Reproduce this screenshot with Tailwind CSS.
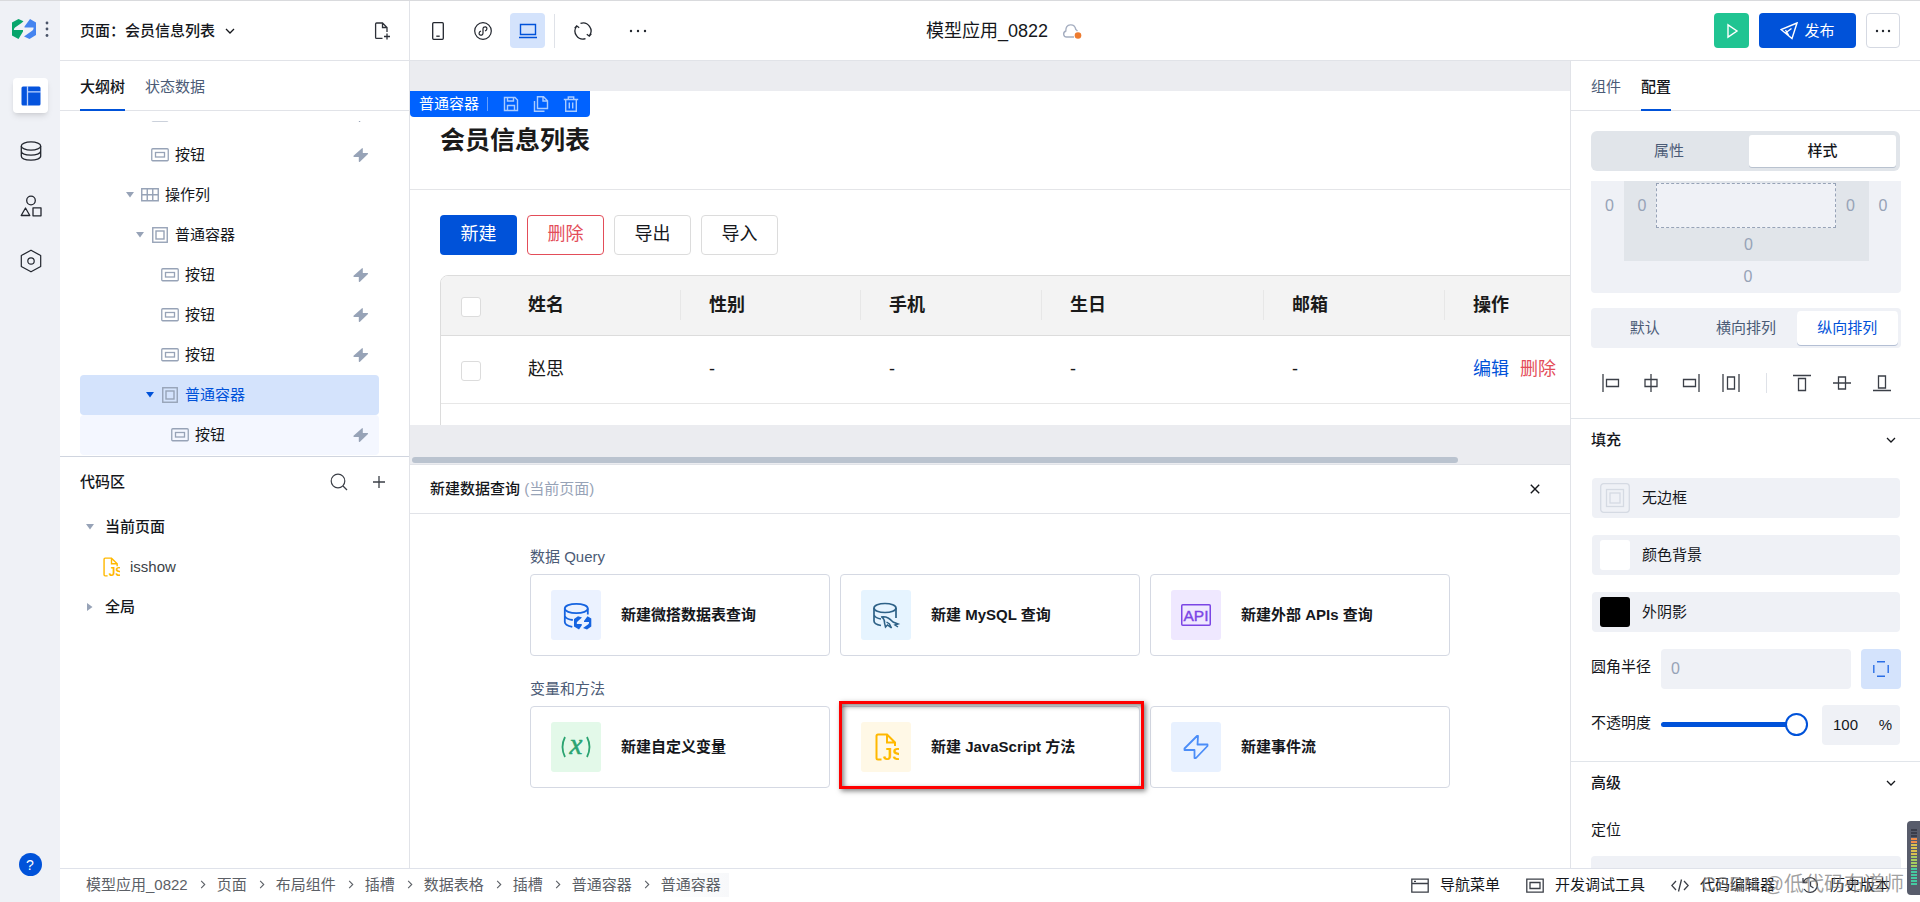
<!DOCTYPE html>
<html lang="zh-CN">
<head>
<meta charset="utf-8">
<meta name="viewport" content="width=device-width, initial-scale=1">
<title>模型应用_0822</title>
<script src="https://cdn.jsdelivr.net/npm/@tailwindcss/browser@4"></script>
</head>
<body class="relative flex h-screen overflow-hidden border-t border-[#d9dadd] bg-white font-['Liberation_Sans','Noto_Sans_CJK_SC',sans-serif] text-[15px] leading-6 text-[#15171c]">

<!-- shared icons -->
<svg class="hidden" aria-hidden="true">
  <symbol id="i-button" viewBox="0 0 18 14"><rect x=".75" y=".75" width="16.5" height="12" rx="1" fill="none" stroke="#97a3b7" stroke-width="1.3"/><rect x="4.5" y="4.5" width="9" height="4.5" fill="none" stroke="#97a3b7" stroke-width="1.3"/></symbol>
  <symbol id="i-box" viewBox="0 0 18 18"><rect x="1.75" y="1.75" width="14.5" height="14.5" fill="none" stroke="#97a3b7" stroke-width="1.4"/><rect x="5" y="5" width="8" height="8" fill="none" stroke="#97a3b7" stroke-width="1.4"/></symbol>
  <symbol id="i-grid" viewBox="0 0 18 14"><path d="M.75.75h16.5v12H.75zM.75 6.75h16.5M6.25.75v12M11.75.75v12" fill="none" stroke="#97a3b7" stroke-width="1.4"/></symbol>
  <symbol id="i-bolt" viewBox="0 0 16 16"><path d="M9 1.200.5 8.800Q0 9.900 1 9.900H5.800V14.600Q6 15.400 6.700 14.900L15 7Q15.400 6.100 14.500 6.100H9.800V1.500Q9.600.8 9 1.200z" fill="#97a3b7"/></symbol>
  <symbol id="i-down" viewBox="0 0 10 10"><path d="M1 2h8L5 7.500z" fill="currentColor"/></symbol>
  <symbol id="i-chev" viewBox="0 0 10 10"><path d="M1 3l4 4 4-4" fill="none" stroke="currentColor" stroke-width="1.3"/></symbol>
  <symbol id="i-next" viewBox="0 0 10 10"><path d="M3.5 1l4 4-4 4" fill="none" stroke="#5c6066" stroke-width="1.2"/></symbol>
  <symbol id="i-js" viewBox="0 0 24 28"><path d="M6.500 26.500H3Q1.500 26.500 1.500 25V3Q1.500 1.500 3 1.500H12l8 8V13M12 1.500V9.500h8" fill="none" stroke="#ffb800" stroke-width="2"/><text x="8" y="27" font-family="Liberation Sans Narrow, Liberation Sans" font-size="17" font-weight="700" fill="#ffb800">JS</text></symbol>
</svg>

<aside class="flex w-[60px] shrink-0 flex-col items-center bg-[#eff1f6]">
  <div class="flex h-[77px] w-full items-start gap-[9px] pt-[18px] pl-3">
    <svg class="h-5 w-6" viewBox="0 0 24 20" aria-label="logo"><path d="M0 3.500 6.500 0 11.500 2.300 9.500 4 3 8.500Q1.300 10 2 11H11V12.500L6.500 20 0 16.500z" fill="#07a56b"/><path d="M24 16 17.500 20 12 17.500 20.500 11.500Q22 10 21.500 8.500H12.500V7.500L18 0 24 3.500z" fill="#4584ef"/></svg>
    <svg class="h-[18px] w-1" viewBox="0 0 4 18" fill="#4a5468"><circle cx="2" cy="4" r="1.4"/><circle cx="2" cy="10" r="1.4"/><circle cx="2" cy="16.5" r="1.4"/></svg>
  </div>
  <nav class="flex flex-col items-center gap-5 pl-px">
    <button class="flex size-[35px] items-center justify-center rounded bg-white shadow-md" aria-label="页面"><svg class="size-5" viewBox="0 0 20 20"><rect x=".5" y=".5" width="19" height="19" rx="1.5" fill="#0553dd"/><path d="M6.500 0v20M6.500 5.800H20" stroke="#bcd3ff" stroke-width="1.3"/></svg></button>
    <button class="flex size-[35px] items-center justify-center" aria-label="数据"><svg class="h-5 w-[22px]" viewBox="0 0 22 20" fill="none" stroke="#22262e" stroke-width="1.3"><ellipse cx="11" cy="5" rx="9.7" ry="4.2"/><path d="M1.300 5v10C1.300 20.500 20.700 20.500 20.700 15V5M1.300 10C1.300 15.400 20.700 15.400 20.700 10"/></svg></button>
    <button class="flex size-[35px] items-center justify-center" aria-label="组件"><svg class="size-[22px]" viewBox="0 0 22 22" fill="none" stroke="#22262e" stroke-width="1.3"><circle cx="11" cy="5.5" r="4.3"/><path d="M5.500 13 1.200 20.500h8.600zM13 12.800h8v8h-8z" stroke-linejoin="round"/></svg></button>
    <button class="flex size-[35px] items-center justify-center" aria-label="设置"><svg class="h-6 w-[22px]" viewBox="0 0 22 24" fill="none" stroke="#22262e" stroke-width="1.2"><path d="M11 1.200 20.700 6.600v10.800L11 22.800 1.300 17.400V6.600z" stroke-linejoin="round"/><circle cx="11" cy="12" r="3.2"/></svg></button>
  </nav>
  <button class="mt-auto mb-[26px] flex size-[23px] items-center justify-center rounded-full bg-[#0052d9] text-sm text-white" aria-label="帮助">?</button>
</aside>

<div class="flex min-w-0 flex-1 flex-col">

<header class="flex h-[60px] shrink-0 border-b border-[#e1e3e8]">
  <div class="flex w-[350px] shrink-0 items-center border-r border-[#e1e3e8] pr-4 pl-5">
    <button class="flex items-center gap-2.5 font-medium">页面：会员信息列表<svg class="size-2.5"><use href="#i-chev"/></svg></button>
    <button class="ml-auto" aria-label="新建页面"><svg class="size-5" viewBox="0 0 20 20" fill="none" stroke="#2d3139" stroke-width="1.3"><path d="M9.500 17.400H3.600Q2.600 17.400 2.600 16.400V3Q2.600 2 3.600 2H9.500l4.500 4.500v4.500M9.500 2v4.500H14M14 12.500v6M11 15.500h6"/></svg></button>
  </div>
  <div class="flex min-w-0 flex-1 items-center pr-5">
    <div class="flex flex-[506] items-center pl-2.5">
      <button class="flex size-[35px] items-center justify-center" aria-label="手机"><svg class="h-[18px] w-3" viewBox="0 0 12 18" fill="none" stroke="#22262e" stroke-width="1.3"><rect x=".7" y=".7" width="10.6" height="16.6" rx="1"/><path d="M4.300 14.200h3.400"/></svg></button>
      <button class="ml-2.5 flex size-[35px] items-center justify-center" aria-label="小程序"><svg class="size-[18px]" viewBox="0 0 18 18" fill="none" stroke="#22262e" stroke-width="1.2"><circle cx="9" cy="9" r="8.3"/><path d="M7 9C4.500 9.800 4.500 12.800 6.500 13.200 8 13.300 9 12.500 9 11V7C9 5.500 10 4.700 11.500 4.800 13.500 5.200 13.500 8.200 11 9"/></svg></button>
      <button class="ml-2.5 flex size-[35px] items-center justify-center rounded bg-[#d4e3fc]" aria-label="电脑"><svg class="h-4 w-[18px]" viewBox="0 0 18 16" fill="none" stroke="#0052d9" stroke-width="1.4"><path d="M1.500 1.500h15v10h-15zM0 14.500h18"/></svg></button>
      <span class="ml-[9px] h-[34px] w-px bg-[#dfe2e8]"></span>
      <button class="ml-2.5 flex size-[35px] items-center justify-center" aria-label="刷新"><svg class="size-[18px]" viewBox="0 0 18 18" fill="none" stroke="#22262e" stroke-width="1.3"><path d="M6.500 1.300A8 8 0 0 1 15.300 13.800M11.500 16.700A8 8 0 0 1 2.700 4.200M17.300 11.800 15.300 14.200 12.800 12.300M.7 6.200 2.700 3.800 5.200 5.700"/></svg></button>
      <button class="ml-5 flex size-[35px] items-center justify-center" aria-label="更多"><svg class="h-1 w-[18px]" viewBox="0 0 18 4" fill="#22262e"><circle cx="2" cy="2" r="1.2"/><circle cx="9" cy="2" r="1.2"/><circle cx="16" cy="2" r="1.2"/></svg></button>
    </div>
    <h1 class="flex shrink-0 items-center gap-3.5 text-lg">模型应用_0822<svg class="h-[18px] w-5" viewBox="0 0 20 18"><path d="M12 15H4.500C1.500 15 .3 10.500 3.800 9 3.600 1.300 12.500 1 13.800 7.500L15.500 9" fill="none" stroke="#a5aec0" stroke-width="1.4"/><circle cx="16" cy="13.5" r="3.3" fill="#ed7b2f"/></svg></h1>
    <div class="flex flex-[818] items-center justify-end gap-2.5">
      <button class="flex size-[35px] items-center justify-center rounded bg-[#20c492]" aria-label="运行"><svg class="size-4" viewBox="0 0 16 16" fill="none" stroke="#fff" stroke-width="1.4"><path d="M4 1.800v12.400L13 8z"/></svg></button>
      <button class="flex h-[35px] w-[97px] items-center justify-center gap-1.5 rounded bg-[#0052d9] text-white"><svg class="size-[18px]" viewBox="0 0 18 18" fill="none" stroke="#fff" stroke-width="1.4"><path d="M17 1 1 7.500l11 9zM5.500 11l6-4.500M8.500 13l-3-5"/></svg>发布</button>
      <button class="flex h-[35px] w-[34px] items-center justify-center rounded border border-[#d5d9e2]" aria-label="更多操作"><svg class="h-1 w-[18px]" viewBox="0 0 18 4" fill="#22262e"><circle cx="3" cy="2" r="1.2"/><circle cx="9" cy="2" r="1.2"/><circle cx="15" cy="2" r="1.2"/></svg></button>
    </div>
  </div>
</header>

<main class="flex min-h-0 flex-1">

<!-- outline tree and code list -->
<section class="flex w-[350px] shrink-0 flex-col border-r border-[#e1e3e8]">
  <div class="flex h-[50px] shrink-0 gap-5 border-b border-[#e1e3e8] px-5">
    <button class="h-[50px] border-b-2 border-[#0052d9] pt-1 font-medium">大纲树</button>
    <button class="h-[50px] pt-0.5 text-[#4b5b76]">状态数据</button>
  </div>
  <div class="h-[345px] shrink-0 px-5 pt-2.5">
    <div class="h-[335px] overflow-hidden">
    <ul class="mt-[-26px] w-[299px]">
      <li class="flex h-10 items-center pr-2.5 pl-[71px]"><svg class="h-3.5 w-[18px]"><use href="#i-button"/></svg><svg class="ml-auto size-4"><use href="#i-bolt"/></svg></li>
      <li class="flex h-10 items-center pr-2.5 pl-[71px]"><svg class="h-3.5 w-[18px]"><use href="#i-button"/></svg><span class="ml-1.5">按钮</span><svg class="ml-auto size-4"><use href="#i-bolt"/></svg></li>
      <li class="flex h-10 items-center pl-[45px]"><svg class="size-2.5 text-[#97a3b7]"><use href="#i-down"/></svg><svg class="ml-1.5 h-3.5 w-[18px]"><use href="#i-grid"/></svg><span class="ml-1.5">操作列</span></li>
      <li class="flex h-10 items-center pl-[55px]"><svg class="size-2.5 text-[#97a3b7]"><use href="#i-down"/></svg><svg class="ml-1.5 size-[18px]"><use href="#i-box"/></svg><span class="ml-1.5">普通容器</span></li>
      <li class="flex h-10 items-center pr-2.5 pl-[81px]"><svg class="h-3.5 w-[18px]"><use href="#i-button"/></svg><span class="ml-1.5">按钮</span><svg class="ml-auto size-4"><use href="#i-bolt"/></svg></li>
      <li class="flex h-10 items-center pr-2.5 pl-[81px]"><svg class="h-3.5 w-[18px]"><use href="#i-button"/></svg><span class="ml-1.5">按钮</span><svg class="ml-auto size-4"><use href="#i-bolt"/></svg></li>
      <li class="flex h-10 items-center pr-2.5 pl-[81px]"><svg class="h-3.5 w-[18px]"><use href="#i-button"/></svg><span class="ml-1.5">按钮</span><svg class="ml-auto size-4"><use href="#i-bolt"/></svg></li>
      <li class="flex h-10 items-center rounded bg-[#d4e3fc] pl-[65px] text-[#0052d9]"><svg class="size-2.5"><use href="#i-down"/></svg><svg class="ml-1.5 size-[18px]"><use href="#i-box"/></svg><span class="ml-1.5">普通容器</span></li>
      <li class="flex h-10 items-center rounded bg-[#f4f7ff] pr-2.5 pl-[91px]"><svg class="h-3.5 w-[18px]"><use href="#i-button"/></svg><span class="ml-1.5">按钮</span><svg class="ml-auto size-4"><use href="#i-bolt"/></svg></li>
    </ul>
    </div>
  </div>
  <div class="flex-1 border-t border-[#d0d5df] px-5">
    <div class="flex h-[50px] items-center">
      <h2 class="font-medium">代码区</h2>
      <button class="ml-auto" aria-label="搜索"><svg class="size-[18px]" viewBox="0 0 18 18" fill="none" stroke="#3b3f47" stroke-width="1.2"><circle cx="8" cy="8" r="6.8"/><path d="M13 13l4 4"/></svg></button>
      <button class="mr-[3px] ml-6" aria-label="新建"><svg class="size-3.5" viewBox="0 0 14 14" stroke="#3b3f47" stroke-width="1.3"><path d="M7 1v12M1 7h12"/></svg></button>
    </div>
    <ul>
      <li class="flex h-10 items-center gap-2.5 pl-[5px] font-medium"><svg class="size-2.5 text-[#97a3b7]"><use href="#i-down"/></svg>当前页面</li>
      <li class="flex h-10 items-center gap-2.5 pl-[23px] text-[#3b3f47]"><svg class="h-5 w-[17px]"><use href="#i-js"/></svg>isshow</li>
      <li class="flex h-10 items-center gap-2.5 pl-[5px] font-medium"><svg class="size-2.5 -rotate-90 text-[#97a3b7]"><use href="#i-down"/></svg>全局</li>
    </ul>
  </div>
</section>

<!-- canvas and query panel -->
<section class="flex min-w-0 flex-1 flex-col">
  <div class="relative h-[403px] shrink-0 bg-[#ebecf0] pt-[30px]">
    <div class="absolute top-[30px] left-0 flex h-[26px] w-[180px] items-center rounded-b bg-[#0062ff] pl-[9px] text-white">
      普通容器<span class="ml-2 h-3.5 w-px bg-white/40"></span>
      <button class="ml-[15px]" aria-label="保存"><svg class="size-4" viewBox="0 0 16 16" fill="none" stroke="#a9cbff" stroke-width="1.4"><path d="M1.500 1.500h10.500L14.500 4v10.500h-13zM4.500 1.500v3.500h6v-3.500M4.500 14.500v-5h7v5"/></svg></button>
      <button class="ml-3.5" aria-label="复制"><svg class="size-4" viewBox="0 0 16 16" fill="none" stroke="#a9cbff" stroke-width="1.4"><path d="M4.500.8h6l4 4v7.700h-10zM10 .8V5h4.500M1.500 5v10.200h10"/></svg></button>
      <button class="ml-3.5" aria-label="删除"><svg class="size-4" viewBox="0 0 16 16" fill="none" stroke="#a9cbff" stroke-width="1.4"><path d="M.8 3.500h14.400M5.300 3.500V1h5.400v2.500M2.700 3.500v11.700h10.600V3.500M6.300 6.500v6M9.700 6.500v6"/></svg></button>
    </div>
    <div class="h-[334px] overflow-hidden bg-white">
      <div class="flex h-[99px] items-center border-b border-[#e4e5e8] px-[30px]"><h2 class="text-[25px] leading-8 font-bold text-[#1a1a1a]">会员信息列表</h2></div>
      <div class="pt-[25px] pl-[30px]">
        <div class="flex gap-2.5 text-lg">
          <button class="h-10 w-[77px] rounded bg-[#0052d9] pb-0.5 text-white">新建</button>
          <button class="h-10 w-[77px] rounded border border-[#e34d59] pb-0.5 text-[#e34d59]">删除</button>
          <button class="h-10 w-[77px] rounded border border-[#dcdcdc] pb-0.5">导出</button>
          <button class="h-10 w-[77px] rounded border border-[#dcdcdc] pb-0.5">导入</button>
        </div>
        <div class="mt-5 w-[1220px] overflow-hidden rounded-t-lg border border-[#dcdcdc]">
          <table class="w-full table-fixed text-left text-lg text-[#1a1a1a]">
            <colgroup><col class="w-[59px]"><col class="w-[181px]"><col class="w-[180px]"><col class="w-[181px]"><col class="w-[222px]"><col class="w-[181px]"><col></colgroup>
            <thead class="bg-[#f3f3f3]">
              <tr class="h-[59px] border-b border-[#dcdcdc] font-bold">
                <th class="pt-1 pl-5"><input type="checkbox" aria-label="全选" class="block size-5 appearance-none rounded-[3px] border border-[#dcdcdc] bg-white"></th>
                <th class="p-0"><div class="flex h-[30px] items-center border-r border-[#e7e7e7] pl-7">姓名</div></th>
                <th class="p-0"><div class="flex h-[30px] items-center border-r border-[#e7e7e7] pl-7">性别</div></th>
                <th class="p-0"><div class="flex h-[30px] items-center border-r border-[#e7e7e7] pl-7">手机</div></th>
                <th class="p-0"><div class="flex h-[30px] items-center border-r border-[#e7e7e7] pl-7">生日</div></th>
                <th class="p-0"><div class="flex h-[30px] items-center border-r border-[#e7e7e7] pl-7">邮箱</div></th>
                <th class="p-0"><div class="flex h-[30px] items-center pl-7">操作</div></th>
              </tr>
            </thead>
            <tbody>
              <tr class="h-[68px] border-b border-[#e7e7e7]">
                <td class="pt-1 pl-5"><input type="checkbox" aria-label="选择赵思" class="block size-5 appearance-none rounded-[3px] border border-[#dcdcdc] bg-white"></td>
                <td class="pl-7">赵思</td><td class="pl-7">-</td><td class="pl-7">-</td><td class="pl-7">-</td><td class="pl-7">-</td>
                <td class="pl-7"><div class="flex gap-[11px]"><a href="#" class="text-[#0052d9]">编辑</a><a href="#" class="text-[#e34d59]">删除</a></div></td>
              </tr>
              <tr class="h-[68px]"><td colspan="7"></td></tr>
            </tbody>
          </table>
        </div>
      </div>
    </div>
    <div class="mt-8 mr-28 ml-0.5 h-1.5 rounded-full bg-[#bac3cf]"></div>
  </div>

  <div class="flex-1 border-t border-[#e1e3e8]">
    <div class="flex h-[49px] items-center border-b border-[#e1e3e8] px-5">
      <h2 class="font-medium">新建数据查询 <span class="font-normal text-[#97a3b7]">(当前页面)</span></h2>
      <button class="mr-2.5 ml-auto" aria-label="关闭"><svg class="size-2.5" viewBox="0 0 10 10" stroke="#15171c" stroke-width="1.4"><path d="M.8.8l8.400 8.400M9.200.8.8 9.200"/></svg></button>
    </div>
    <div class="mx-auto flex max-w-[920px] flex-col gap-[21px] pt-[31px]">
      <div>
        <h3 class="mb-[5px] text-[#4b5b76]">数据 Query</h3>
        <div class="grid grid-cols-3 gap-2.5">
          <button class="flex h-[82px] items-center gap-5 rounded border border-[#d5d9e3] px-5 font-bold">
            <svg class="size-[50px]" viewBox="0 0 50 50"><rect width="50" height="50" rx="3" fill="#ebf2ff"/><g fill="none" stroke="#1664e0" stroke-width="1.8"><ellipse cx="25.300" cy="18.500" rx="11.500" ry="4.700"/><path d="M13.800 18.500v13.500c0 2.300 3.500 4 7.500 4.800M13.800 26c1 2.500 4.500 3.500 8 4M36.800 18.500v6"/></g><path d="M23 29 27 26.200 31 27.500 26.500 31.500Q25 33 26 34H30.500L31 35 28 39.500 23 36.500z" fill="#1664e0"/><path d="M40.300 36.500 36 39.500 32 38 37 34.500Q38.500 33 38 32H33V31L36.500 26.200 40.300 28.500z" fill="#1664e0"/></svg>新建微搭数据表查询</button>
          <button class="flex h-[82px] items-center gap-5 rounded border border-[#d5d9e3] px-5 font-bold">
            <svg class="size-[50px]" viewBox="0 0 50 50"><rect width="50" height="50" rx="3" fill="#e6f4ff"/><g fill="none" stroke="#2d6187" stroke-width="1.7"><ellipse cx="24" cy="18" rx="11" ry="4.500"/><path d="M13 18v13c0 2.300 3 3.800 7 4.500M13 25c1 2.500 4 3.500 7 4M35 18v10"/><path d="M20 27c6-1 9 2 12 5l5 2-3 1 3 2M21 27c2 2 3 4 2.500 6l1 4 2-2 4 3-2-4-3-2" stroke-width="1.5"/></g></svg>新建 MySQL 查询</button>
          <button class="flex h-[82px] items-center gap-5 rounded border border-[#d5d9e3] px-5 font-bold">
            <svg class="size-[50px]" viewBox="0 0 50 50"><rect width="50" height="50" rx="3" fill="#efe8ff"/><rect x="10.750" y="14.750" width="28.500" height="20.500" rx="1" fill="none" stroke="#7b45e5" stroke-width="1.5"/><text x="25" y="30.500" text-anchor="middle" font-family="Liberation Sans" font-size="15.500" font-weight="400" stroke="#7b45e5" stroke-width=".4" fill="#7b45e5">API</text></svg>新建外部 APIs 查询</button>
        </div>
      </div>
      <div>
        <h3 class="mb-[5px] text-[#4b5b76]">变量和方法</h3>
        <div class="grid grid-cols-3 gap-2.5">
          <button class="flex h-[82px] items-center gap-5 rounded border border-[#d5d9e3] px-5 font-bold">
            <svg class="size-[50px]" viewBox="0 0 50 50"><rect width="50" height="50" rx="3" fill="#e3f9e9"/><path d="M14 15q-5 10 0 20M36 15q5 10 0 20" fill="none" stroke="#2ba471" stroke-width="1.8"/><text x="25" y="31.500" text-anchor="middle" font-family="Liberation Serif" font-style="italic" font-size="29" font-weight="400" stroke="#2ba471" stroke-width=".5" fill="#2ba471">x</text></svg>新建自定义变量</button>
          <div class="relative">
            <button class="flex h-[82px] w-full items-center gap-5 rounded border border-[#d5d9e3] px-5 font-bold">
              <span class="flex size-[50px] items-center justify-center rounded-[3px] bg-[#fff8e6]"><svg class="ml-0.5 h-7 w-6"><use href="#i-js"/></svg></span>新建 JavaScript 方法</button>
            <!-- highlight frame -->
            <span class="pointer-events-none absolute -top-[5px] -right-1 -bottom-px -left-px z-10 border-3 border-[#fe0000] shadow-[2px_2px_5px_rgba(0,0,0,0.5),inset_2px_2px_5px_rgba(0,0,0,0.5)]"></span>
          </div>
          <button class="flex h-[82px] items-center gap-5 rounded border border-[#d5d9e3] px-5 font-bold">
            <svg class="size-[50px]" viewBox="0 0 50 50"><rect width="50" height="50" rx="3" fill="#e8f1ff"/><path d="M26 14 13.500 26.500v1.500H23.500L23.500 36h1.500L36.500 24v-1.500H26.500L27 14z" fill="none" stroke="#4b8df8" stroke-width="1.8" stroke-linejoin="round"/></svg>新建事件流</button>
        </div>
      </div>
    </div>
  </div>
</section>

<!-- style settings -->
<section class="flex w-[350px] shrink-0 flex-col overflow-hidden border-l border-[#e1e3e8]">
  <div class="flex h-[50px] shrink-0 gap-5 border-b border-[#e1e3e8] px-5">
    <button class="h-[50px] pt-0.5 text-[#4b5b76]">组件</button>
    <button class="h-[50px] border-b-2 border-[#0052d9] pt-1 font-medium">配置</button>
  </div>
  <div class="pt-5 pr-[19px] pl-5">
    <div class="mr-px flex h-10 rounded-md bg-[#e1e5ea] p-1">
      <button class="flex-1 pr-1.5 text-[#4b5b76]">属性</button>
      <button class="w-[147px] rounded-[3px] bg-white font-medium shadow-[0_1px_0_#b9c2cf]">样式</button>
    </div>
    <div class="mt-2.5 rounded-b bg-[#eff1f6] text-center text-base text-[#97a3b7]">
      <div class="flex">
        <span class="w-[33px] pt-[13px] pl-1">0</span>
        <div class="flex-1 bg-[#e1e5ea]">
          <div class="flex pt-0.5">
            <span class="w-8 pt-[11px] pl-1">0</span>
            <div class="h-[45px] flex-1 border border-dashed border-[#97a3b7] bg-[#eff1f6]"></div>
            <span class="w-[33px] pt-[11px] pr-1">0</span>
          </div>
          <div class="h-[33px] pt-[5px] pl-1">0</div>
        </div>
        <span class="w-8 pt-[13px] pr-1">0</span>
      </div>
      <div class="h-8 pt-1 pl-1">0</div>
    </div>
    <div class="mt-[15px] grid h-10 grid-cols-3 rounded bg-[#eff1f6] p-[3px] text-[#4b5b76]">
      <button>默认</button><button>横向排列</button>
      <button class="rounded bg-white text-[#0052d9] shadow-[0_1px_0_#b4bfd4]">纵向排列</button>
    </div>
    <div class="flex h-[70px] items-center justify-between pr-2.5 pl-[11px] text-[#3b3f47]">
      <button aria-label="左对齐"><svg class="size-[18px]" viewBox="0 0 18 18" fill="none" stroke="currentColor" stroke-width="1.3"><path d="M1 0v18M4.500 5.500h12v7h-12z"/></svg></button>
      <button aria-label="水平居中"><svg class="size-[18px]" viewBox="0 0 18 18" fill="none" stroke="currentColor" stroke-width="1.3"><path d="M9 0v18M3 5.500h12v7H3z"/></svg></button>
      <button aria-label="右对齐"><svg class="size-[18px]" viewBox="0 0 18 18" fill="none" stroke="currentColor" stroke-width="1.3"><path d="M17 0v18M1.500 5.500h12v7h-12z"/></svg></button>
      <button aria-label="水平分布"><svg class="size-[18px]" viewBox="0 0 18 18" fill="none" stroke="currentColor" stroke-width="1.3"><path d="M1 0v18M17 0v18M5.500 3h7v12h-7z"/></svg></button>
      <span class="mx-1 h-5 w-px bg-[#dfe2e8]"></span>
      <button aria-label="顶对齐"><svg class="size-[18px]" viewBox="0 0 18 18" fill="none" stroke="currentColor" stroke-width="1.3"><path d="M0 1.500h18M5.500 4.500h7v12h-7z"/></svg></button>
      <button aria-label="垂直居中"><svg class="size-[18px]" viewBox="0 0 18 18" fill="none" stroke="currentColor" stroke-width="1.3"><path d="M0 9h18M5.500 3h7v12h-7z"/></svg></button>
      <button aria-label="底对齐"><svg class="size-[18px]" viewBox="0 0 18 18" fill="none" stroke="currentColor" stroke-width="1.3"><path d="M0 16.500h18M5.500 2h7v12h-7z"/></svg></button>
    </div>
  </div>
  <div class="border-t border-[#e1e5ea] pr-[19px] pl-5">
    <button class="flex h-[42px] w-full items-center justify-between pr-[5px] font-medium">填充<svg class="size-2.5"><use href="#i-chev"/></svg></button>
    <div class="mt-[17px] flex flex-col gap-[17px] px-px">
      <button class="flex h-10 items-center gap-3 rounded bg-[#eff1f6] px-2"><svg class="size-[30px]" viewBox="0 0 30 30" fill="none" stroke="#d5dae3" stroke-width="1.3"><rect x=".7" y=".7" width="28.6" height="28.6" rx="3"/><rect x="6.5" y="6.5" width="17" height="17"/><rect x="10" y="10" width="10" height="10"/></svg>无边框</button>
      <button class="flex h-10 items-center gap-3 rounded bg-[#eff1f6] px-2"><span class="size-[30px] rounded-[3px] bg-white"></span>颜色背景</button>
      <button class="flex h-10 items-center gap-3 rounded bg-[#eff1f6] px-2"><span class="size-[30px] rounded-[3px] bg-black"></span>外阴影</button>
    </div>
    <div class="mt-[17px] flex h-10 items-center gap-2.5">
      <label for="radius" class="shrink-0 pb-1">圆角半径</label>
      <input id="radius" type="text" placeholder="0" class="h-10 min-w-0 flex-1 rounded bg-[#eff1f6] px-2.5 text-base outline-none placeholder:text-[#97a3b7]">
      <button class="flex size-10 shrink-0 items-center justify-center rounded bg-[#d4e3fc]" aria-label="四角"><svg class="size-4" viewBox="0 0 16 16" stroke="#2a6ee6" stroke-width="1.4"><path d="M4 .8h8M4 15.200h8M.8 4v8M15.200 4v8"/></svg></button>
    </div>
    <div class="my-4 flex h-10 items-center">
      <label for="opacity" class="shrink-0 pb-1">不透明度</label>
      <input id="opacity" type="range" min="0" max="100" value="100" class="mb-0.5 ml-2.5 h-[5px] min-w-0 flex-1 appearance-none rounded-full bg-[#0052d9] [&::-webkit-slider-thumb]:size-[23px] [&::-webkit-slider-thumb]:appearance-none [&::-webkit-slider-thumb]:rounded-full [&::-webkit-slider-thumb]:border-2 [&::-webkit-slider-thumb]:border-[#0052d9] [&::-webkit-slider-thumb]:bg-white">
      <div class="mr-px ml-3.5 flex h-10 w-[78px] items-center justify-between rounded bg-[#eff1f6] pr-2 pl-[11px]"><input type="text" value="100" aria-label="不透明度数值" class="w-9 bg-transparent text-[15px] outline-none"><span>%</span></div>
    </div>
  </div>
  <div class="border-t border-[#e1e5ea] pr-[19px] pl-5">
    <button class="flex h-[42px] w-full items-center justify-between pr-[5px] font-medium">高级<svg class="size-2.5"><use href="#i-chev"/></svg></button>
    <label for="position" class="my-3.5 block">定位</label>
    <select id="position" class="h-10 w-full appearance-none rounded bg-[#eff1f6]"><option></option></select>
  </div>
</section>
</main>

<footer class="flex h-[34px] shrink-0 items-center border-t border-[#dfe2ea] bg-white pr-[30px] pb-0.5 pl-[26px]">
  <nav class="flex items-center gap-2.5 text-[#5c6066]" aria-label="路径">
    <a href="#">模型应用_0822</a><svg class="size-[9px]"><use href="#i-next"/></svg>
    <a href="#">页面</a><svg class="size-[9px]"><use href="#i-next"/></svg>
    <a href="#">布局组件</a><svg class="size-[9px]"><use href="#i-next"/></svg>
    <a href="#">插槽</a><svg class="size-[9px]"><use href="#i-next"/></svg>
    <a href="#">数据表格</a><svg class="size-[9px]"><use href="#i-next"/></svg>
    <a href="#">插槽</a><svg class="size-[9px]"><use href="#i-next"/></svg>
    <a href="#">普通容器</a><svg class="size-[9px]"><use href="#i-next"/></svg>
    <a href="#" class="bg-linear-to-r from-white to-[#f7f8fa] pr-2">普通容器</a>
  </nav>
  <div class="ml-auto flex items-center gap-[26px]">
    <button class="flex items-center gap-[11px]"><svg class="size-[18px]" viewBox="0 0 18 18" fill="none" stroke="#3b3f47" stroke-width="1.3"><path d="M.8 3.200h16.400v13H.8zM.8 7.500h16.400M3 5.300h2"/></svg>导航菜单</button>
    <button class="flex items-center gap-[11px]"><svg class="size-[18px]" viewBox="0 0 18 18" fill="none" stroke="#3b3f47" stroke-width="1.3"><path d="M.8 3.200h16.400v13H.8zM4 6.500h10v6H4z"/></svg>开发调试工具</button>
    <button class="flex items-center gap-[11px]"><svg class="size-[18px]" viewBox="0 0 18 18" fill="none" stroke="#3b3f47" stroke-width="1.3"><path d="M5 5 .8 9.500 5 14M13 5l4.200 4.500L13 14M10.500 3.500l-3 12"/></svg>代码编辑器</button>
    <button class="flex items-center gap-[11px]"><svg class="size-[18px]" viewBox="0 0 18 18" fill="none" stroke="#3b3f47" stroke-width="1.3"><path d="M2.500 6A7.300 7.300 0 1 1 3 13M2 2v4.500h4.500M9.500 5.500V10l3 2"/></svg>历史版本</button>
  </div>
</footer>
</div>

<!-- watermark and floating meter lie over the page -->
<div class="pointer-events-none absolute right-4 bottom-1 text-xl leading-7 text-[#777]/70">CSDN @低代码布道师</div>
<div class="absolute right-0 bottom-[7px] flex h-[74px] w-[13px] justify-center rounded-l bg-[#585c6b] py-2">
  <svg class="h-[58px] w-1.5" viewBox="0 0 6 58"><path d="M0 1h6M0 4h6M0 7h6" stroke="#3a3d4a" stroke-width="2"/><path d="M0 10h6M0 13h6" stroke="#f08c4a" stroke-width="2"/><path d="M0 16h6M0 19h6M0 22h6M0 25h6" stroke="#d9c04f" stroke-width="2"/><path d="M0 28h6M0 31h6M0 34h6M0 37h6" stroke="#a5cc60" stroke-width="2"/><path d="M0 40h6M0 43h6M0 46h6M0 49h6M0 52h6M0 55h6" stroke="#45c9a0" stroke-width="2"/></svg>
</div>
</body>
</html>
